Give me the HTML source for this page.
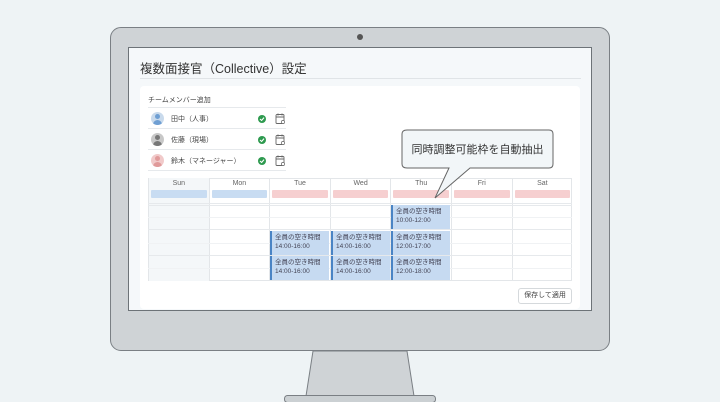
<!DOCTYPE html>
<html><head><meta charset="utf-8"><style>
*{margin:0;padding:0;box-sizing:border-box}
body{width:720px;height:402px;overflow:hidden;background:#eef3f5;font-family:"Liberation Sans","Noto Sans CJK JP",sans-serif;position:relative}
.a{position:absolute}
.mon{left:110px;top:27px;width:500px;height:324px;background:#cfd3d6;border:1.5px solid #7a7f84;border-radius:11px}
.scr{left:128px;top:47px;width:464px;height:264px;background:#f5f8fa;border:1.5px solid #6d7378}
.t{font-size:12.5px;color:#333}
.card{left:140px;top:86px;width:440px;height:223px;background:#fff;border-radius:4px}
.row{left:148px;width:138px;height:21px;border-top:1px solid #e6e9ec;font-size:7px;color:#444}
.av{position:absolute;left:3px;top:4px;width:13px;height:13px;border-radius:50%;overflow:hidden}
.av i{position:absolute;left:4px;top:2px;width:5px;height:5px;border-radius:50%}
.av b{position:absolute;left:2px;top:8px;width:9px;height:7px;border-radius:5px 5px 0 0}
.ic{position:absolute;left:108px;top:4px}
.day{top:178px;width:60.6px;height:103px;border-left:1px solid #e3e6e9;font-size:7px;color:#666;text-align:center;padding-top:2px}
.bar{position:absolute;left:2px;right:2px;top:12px;height:8px;border-radius:1px}
.hl{left:148px;width:424px;height:1px;background:#e6e9ec}
.ev{width:59px;height:24px;background:#c6daf1;border-left:2px solid #4a84c4;font-size:6.5px;color:#445;padding:2px 0 0 3px;line-height:9px}
</style></head><body>
<div class="a mon"></div>
<div class="a" style="left:357px;top:34px;width:6px;height:6px;border-radius:50%;background:#555"></div>
<div class="a scr"></div>
<div class="a t" style="left:140px;top:58px">複数面接官（Collective）設定</div>
<div class="a" style="left:140px;top:78px;width:441px;height:1px;background:#e0e4e7"></div>
<div class="a card"></div>
<div class="a" style="left:148px;top:95px;font-size:7px;color:#444">チームメンバー追加</div>
<svg width="0" height="0" style="position:absolute"><defs><g id="ic"><circle cx="6" cy="7" r="4" fill="#2e9a4f"/><path d="M4 7 L5.6 8.5 L8 5.6" stroke="#fff" stroke-width="1.1" fill="none"/><rect x="20" y="2.5" width="8" height="9" rx="1" fill="none" stroke="#666" stroke-width="0.9"/><path d="M20 5 H28 M22 1.5 V3.5 M26 1.5 V3.5" stroke="#666" stroke-width="0.9"/><circle cx="27" cy="10" r="1.6" fill="#fff" stroke="#666" stroke-width="0.7"/></g></defs></svg>
<div class="a row" style="top:107px"><div class="av" style="background:#c9daec"><i style="background:#6f9fd3"></i><b style="background:#6f9fd3"></b></div><span class="a" style="left:23px;top:6px">田中（人事）</span><svg class="ic" width="32" height="14"><use href="#ic"/></svg></div>
<div class="a row" style="top:128px"><div class="av" style="background:#c8c8c8"><i style="background:#777"></i><b style="background:#777"></b></div><span class="a" style="left:23px;top:6px">佐藤（現場）</span><svg class="ic" width="32" height="14"><use href="#ic"/></svg></div>
<div class="a row" style="top:149px;border-bottom:1px solid #e6e9ec;height:22px"><div class="av" style="background:#f1caca"><i style="background:#e09a9a"></i><b style="background:#e09a9a"></b></div><span class="a" style="left:23px;top:6px">鈴木（マネージャー）</span><svg class="ic" width="32" height="14"><use href="#ic"/></svg></div>

<div class="a" style="left:148px;top:178px;width:424px;height:103px;border:1px solid #e3e6e9"></div>
<div class="a day" style="left:148px;background:#f4f7f9">Sun<div class="bar" style="background:#c8dcf2"></div></div>
<div class="a day" style="left:208.6px">Mon<div class="bar" style="background:#c8dcf2"></div></div>
<div class="a day" style="left:269.2px">Tue<div class="bar" style="background:#f6cfd0"></div></div>
<div class="a day" style="left:329.8px">Wed<div class="bar" style="background:#f6cfd0"></div></div>
<div class="a day" style="left:390.4px">Thu<div class="bar" style="background:#f6cfd0"></div></div>
<div class="a day" style="left:451px">Fri<div class="bar" style="background:#f6cfd0"></div></div>
<div class="a day" style="left:511.6px">Sat<div class="bar" style="background:#f6cfd0"></div></div>
<div class="a hl" style="top:203px"></div><div class="a hl" style="top:205px"></div>
<div class="a hl" style="top:217px;background:#f0f2f4"></div>
<div class="a hl" style="top:229px"></div><div class="a hl" style="top:243px;background:#f0f2f4"></div>
<div class="a hl" style="top:255px"></div><div class="a hl" style="top:268px;background:#f0f2f4"></div>
<div class="a ev" style="left:391px;top:205px">全員の空き時間<br>10:00-12:00</div>
<div class="a ev" style="left:270px;top:231px">全員の空き時間<br>14:00-16:00</div>
<div class="a ev" style="left:331px;top:231px">全員の空き時間<br>14:00-16:00</div>
<div class="a ev" style="left:391px;top:231px">全員の空き時間<br>12:00-17:00</div>
<div class="a ev" style="left:270px;top:256px">全員の空き時間<br>14:00-16:00</div>
<div class="a ev" style="left:331px;top:256px">全員の空き時間<br>14:00-16:00</div>
<div class="a ev" style="left:391px;top:256px">全員の空き時間<br>12:00-18:00</div>

<svg class="a" style="left:0;top:0" width="720" height="402">
<path d="M407 130 H549 Q553 130 553 134 V164 Q553 168 549 168 H470 L435 198 L449 168 H407 Q402 168 402 164 V134 Q402 130 407 130 Z" fill="#f2f6f8" stroke="#666" stroke-width="1"/>
<path d="M313 351 L407 351 L414 396 L306 396 Z" fill="#cfd3d6" stroke="#7a7f84" stroke-width="1"/>
<rect x="284.5" y="395.5" width="151" height="7" rx="3" fill="#cbd0d3" stroke="#7a7f84"/>
</svg>
<div class="a" style="left:402px;top:141px;width:151px;text-align:center;font-size:11px;color:#333">同時調整可能枠を自動抽出</div>
<div class="a" style="left:518px;top:288px;width:54px;height:16px;border:1px solid #d5d9dc;border-radius:3px;font-size:7px;color:#444;text-align:center;line-height:14px;background:#fff">保存して適用</div>
</body></html>
